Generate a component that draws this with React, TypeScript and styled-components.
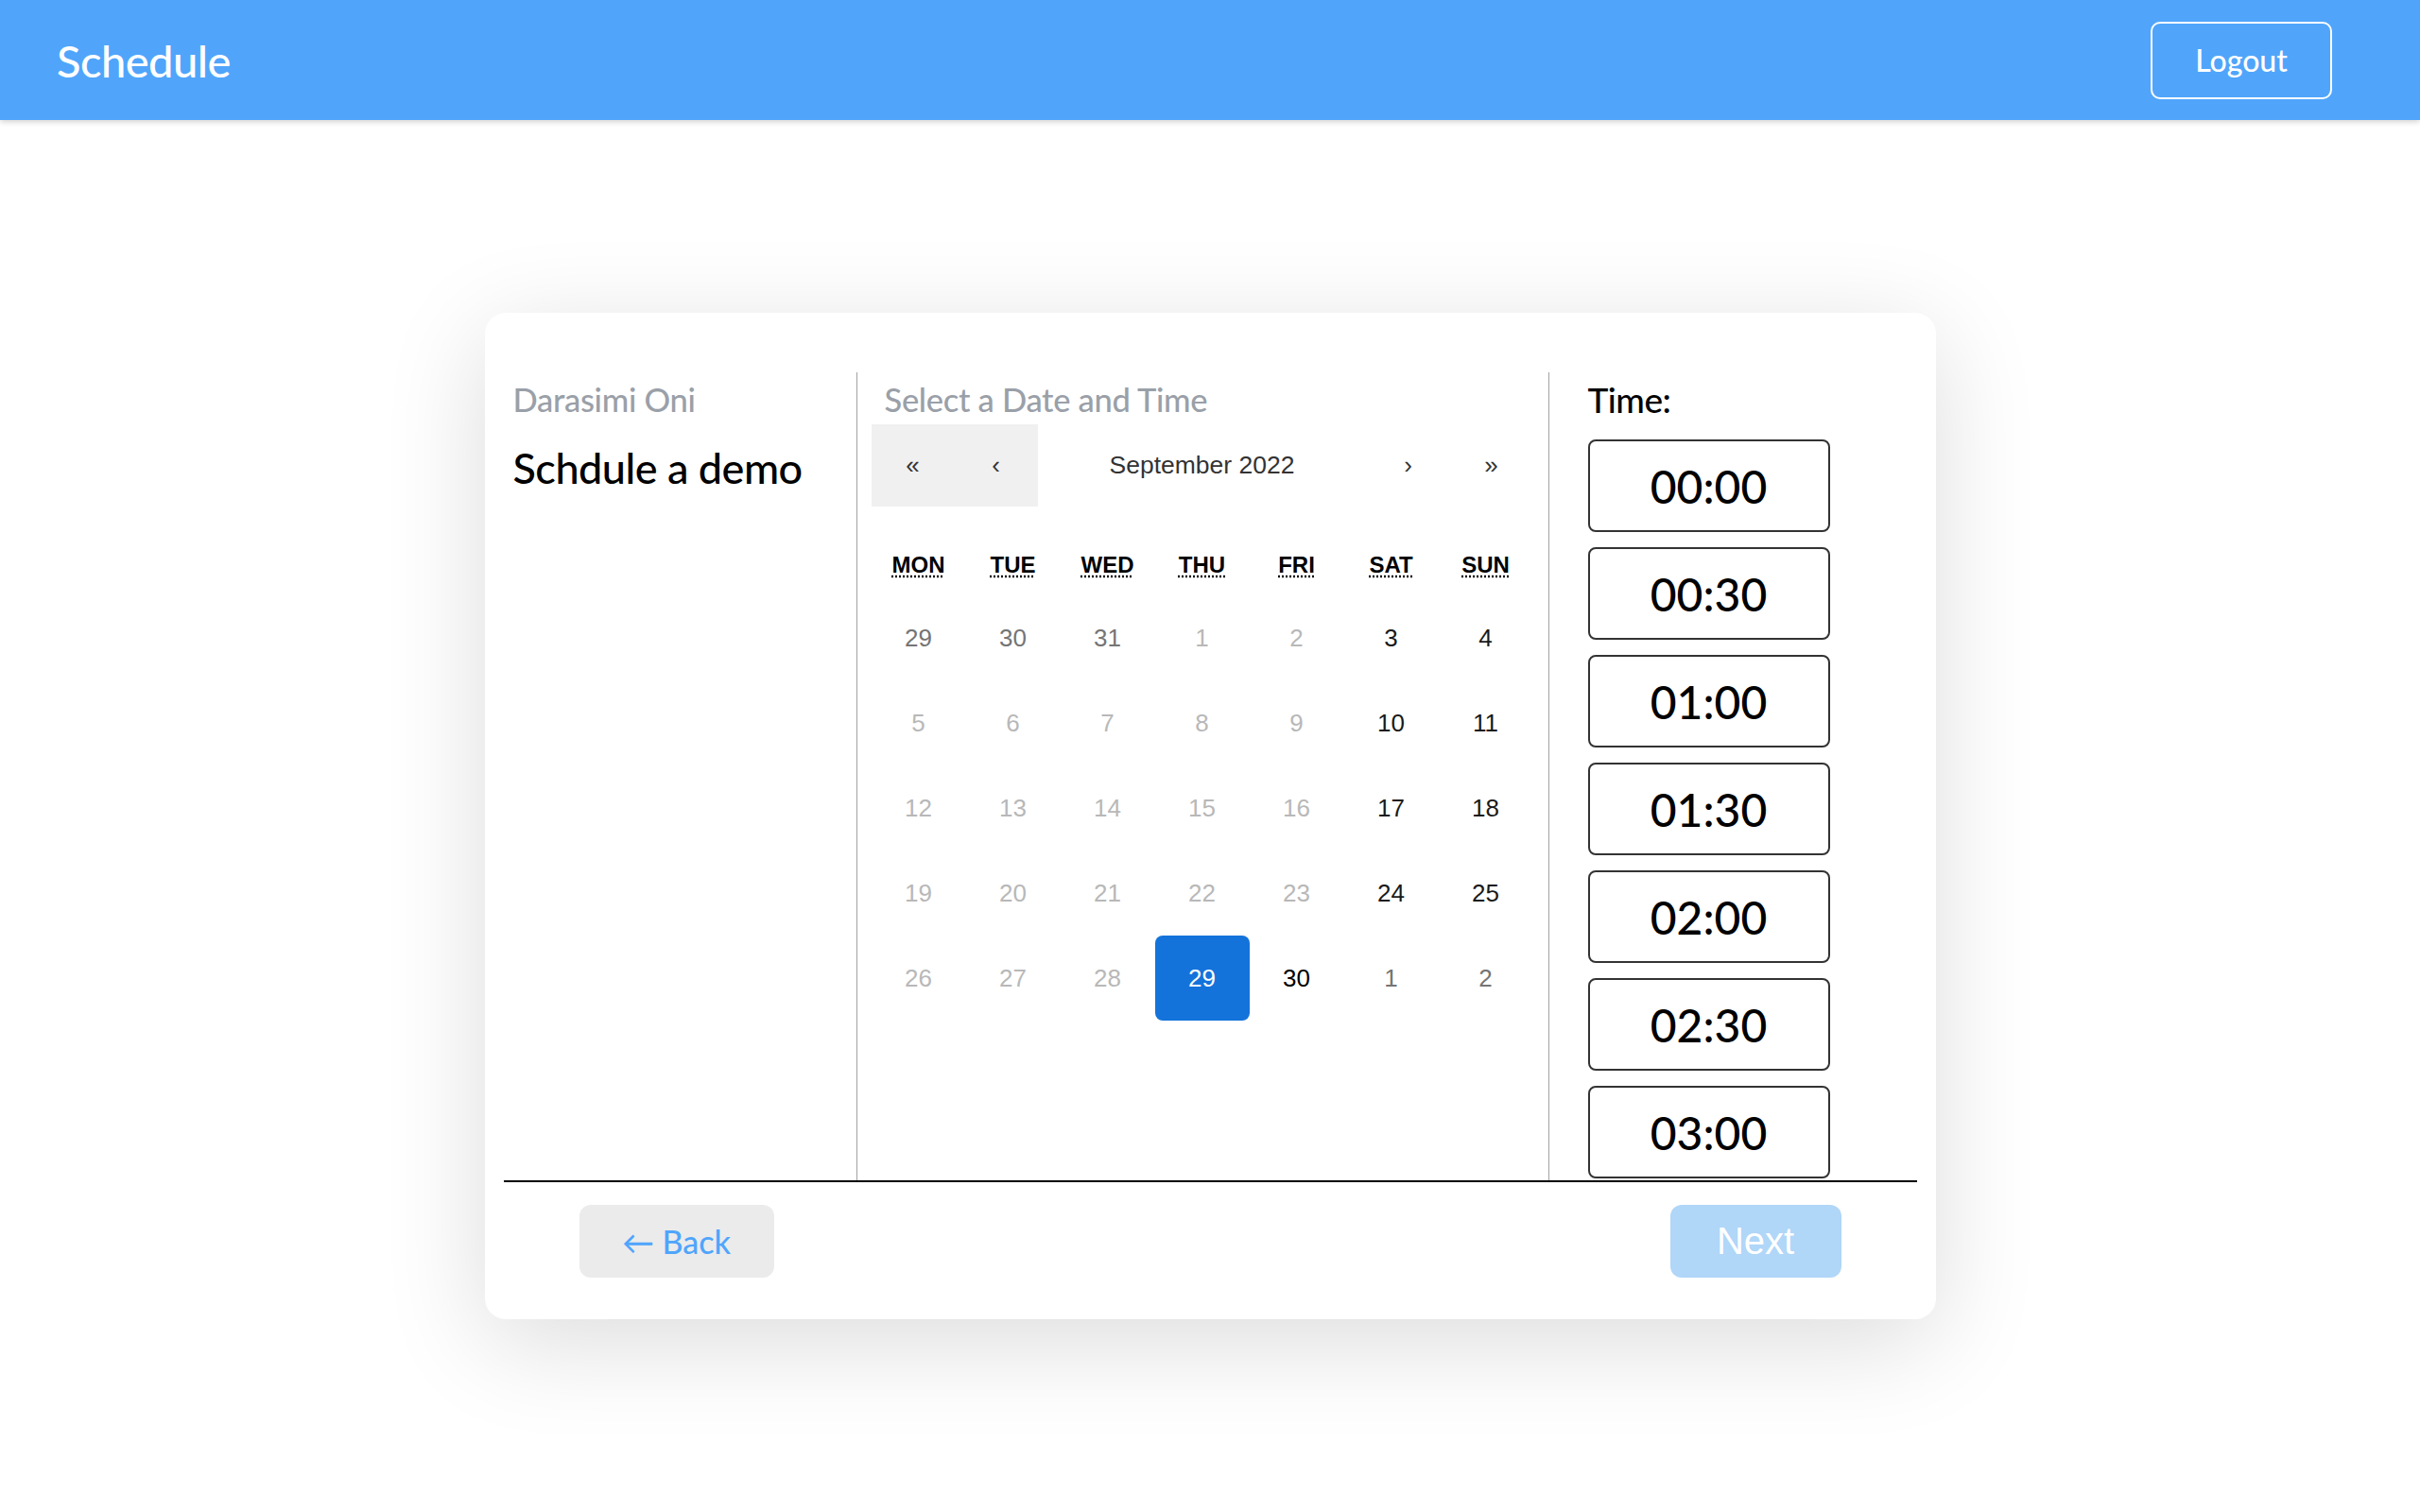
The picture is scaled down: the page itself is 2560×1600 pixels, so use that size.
import React from "react";
import styled, { createGlobalStyle } from "styled-components";

const GlobalStyle = createGlobalStyle`
  html, body { margin: 0; padding: 0; background: #ffffff; }
  body { font-family: Lato, "Noto Sans", sans-serif; }
  * { box-sizing: border-box; }
`;

const Header = styled.header`
  height: 127px;
  background: #50a5fb;
  display: flex;
  align-items: center;
  justify-content: space-between;
  padding: 0 93px 0 60px;
  box-shadow: 0 2px 6px rgba(0, 0, 0, 0.18);
  position: relative;
  z-index: 2;
`;

const Brand = styled.h1`
  margin: 0;
  font-family: Lato, sans-serif;
  font-weight: 500;
  font-size: 47px;
  color: #ffffff;
  letter-spacing: -0.5px;
`;

const LogoutButton = styled.button`
  width: 192px;
  height: 82px;
  border: 2px solid #ffffff;
  border-radius: 10px;
  background: transparent;
  color: #ffffff;
  font-family: Lato, sans-serif;
  font-weight: 500;
  font-size: 32px;
  cursor: pointer;
`;

const Main = styled.main`
  height: calc(100vh - 127px);
  display: flex;
  align-items: center;
  justify-content: center;
`;

const Card = styled.section`
  width: 1535px;
  height: 1065px;
  background: #ffffff;
  border-radius: 22px;
  box-shadow: 0 24px 110px rgba(0, 0, 0, 0.14);
  padding: 63px 20px 0 20px;
  display: flex;
  flex-direction: column;
`;

const Columns = styled.div`
  display: grid;
  grid-template-columns: 374px 732px 390px;
  height: 857px;
  border-bottom: 2px solid #000000;
`;

const Column = styled.div<{ $divider?: boolean; $pl: number }>`
  padding-left: ${(p) => p.$pl}px;
  border-right: ${(p) => (p.$divider ? "1px solid #a3a3a3" : "none")};
  display: flex;
  flex-direction: column;
  min-height: 0;
  overflow: hidden;
`;

const Subtitle = styled.div<{ $indent?: number }>`
  font-family: Lato, sans-serif;
  font-weight: 500;
  font-size: 34.5px;
  line-height: 42px;
  color: #9aa0a8;
  margin-top: 8px;
  margin-left: ${(p) => p.$indent ?? 0}px;
  letter-spacing: -0.3px;
`;

const Title = styled.h2`
  margin: 24px 0 0 0;
  font-family: Lato, sans-serif;
  font-weight: 500;
  font-size: 45px;
  line-height: 54px;
  color: #000000;
  letter-spacing: -0.5px;
`;

const Calendar = styled.div`
  width: 700px;
  margin-top: 5px;
  font-family: "Liberation Sans", Arial, sans-serif;
`;

const Nav = styled.div`
  display: flex;
  height: 87px;
  margin-bottom: 30px;
`;

const NavButton = styled.button<{ $disabled?: boolean }>`
  width: 88px;
  border: none;
  background: ${(p) => (p.$disabled ? "#f0f0f0" : "transparent")};
  font-family: "Liberation Sans", Arial, sans-serif;
  font-size: 26px;
  color: #333333;
  padding: 0;
`;

const NavLabel = styled.div`
  flex: 1;
  display: flex;
  align-items: center;
  justify-content: center;
  font-size: 26.5px;
  color: #333333;
`;

const Weekdays = styled.div`
  display: grid;
  grid-template-columns: repeat(7, 100px);
  height: 64px;
  align-items: center;
`;

const Weekday = styled.abbr`
  text-align: center;
  font-weight: 700;
  font-size: 24px;
  color: #000000;
  text-decoration: underline dotted;
  text-underline-offset: 3px;
  justify-self: center;
`;

const Days = styled.div`
  display: grid;
  grid-template-columns: repeat(7, 100px);
  grid-auto-rows: 90px;
`;

type Kind = "neighbor" | "disabled" | "weekend" | "current" | "active";

const dayColors: Record<Kind, string> = {
  neighbor: "#757575",
  disabled: "#b8b8b8",
  weekend: "#1a1a1a",
  current: "#000000",
  active: "#ffffff",
};

const Day = styled.button<{ $kind: Kind }>`
  border: none;
  border-radius: 8px;
  background: ${(p) => (p.$kind === "active" ? "#1473da" : "transparent")};
  color: ${(p) => dayColors[p.$kind]};
  font-family: "Liberation Sans", Arial, sans-serif;
  font-size: 26px;
  padding: 0;
`;

const TimeLabel = styled.div`
  font-family: Lato, sans-serif;
  font-weight: 500;
  font-size: 37px;
  line-height: 44px;
  color: #000000;
  margin-top: 7px;
  letter-spacing: -0.5px;
`;

const TimeList = styled.div`
  margin-top: 20px;
  display: flex;
  flex-direction: column;
  gap: 16px;
  overflow-y: auto;
  scrollbar-width: none;
  flex: 1;
  min-height: 0;
`;

const TimeButton = styled.button`
  flex: none;
  width: 256px;
  height: 98px;
  border: 2px solid #333333;
  border-radius: 8px;
  background: #ffffff;
  font-family: Lato, sans-serif;
  font-weight: 500;
  font-size: 48px;
  color: #000000;
  padding: 0;
`;

const Footer = styled.div`
  display: flex;
  justify-content: space-between;
  padding: 24px 80px 0 80px;
`;

const BackButton = styled.button`
  width: 206px;
  height: 77px;
  border: none;
  border-radius: 12px;
  background: #ebebeb;
  color: #50a5fb;
  font-family: Lato, sans-serif;
  font-weight: 500;
  font-size: 34px;
`;

const NextButton = styled.button`
  width: 181px;
  height: 77px;
  border: none;
  border-radius: 12px;
  background: #b0d6f8;
  color: #ffffff;
  font-family: "Liberation Sans", Arial, sans-serif;
  font-size: 40px;
`;

const weekdays = ["MON", "TUE", "WED", "THU", "FRI", "SAT", "SUN"];

const days: [string, Kind][] = [
  ["29", "neighbor"], ["30", "neighbor"], ["31", "neighbor"], ["1", "disabled"], ["2", "disabled"], ["3", "weekend"], ["4", "weekend"],
  ["5", "disabled"], ["6", "disabled"], ["7", "disabled"], ["8", "disabled"], ["9", "disabled"], ["10", "weekend"], ["11", "weekend"],
  ["12", "disabled"], ["13", "disabled"], ["14", "disabled"], ["15", "disabled"], ["16", "disabled"], ["17", "weekend"], ["18", "weekend"],
  ["19", "disabled"], ["20", "disabled"], ["21", "disabled"], ["22", "disabled"], ["23", "disabled"], ["24", "weekend"], ["25", "weekend"],
  ["26", "disabled"], ["27", "disabled"], ["28", "disabled"], ["29", "active"], ["30", "current"], ["1", "neighbor"], ["2", "neighbor"],
];

const times = ["00:00", "00:30", "01:00", "01:30", "02:00", "02:30", "03:00"];

export default function App() {
  return (
    <>
      <GlobalStyle />
      <Header>
        <Brand>Schedule</Brand>
        <LogoutButton>Logout</LogoutButton>
      </Header>
      <Main>
        <Card>
          <Columns>
            <Column $divider $pl={10}>
              <Subtitle>Darasimi Oni</Subtitle>
              <Title>Schdule a demo</Title>
            </Column>
            <Column $divider $pl={15}>
              <Subtitle $indent={14}>Select a Date and Time</Subtitle>
              <Calendar>
                <Nav>
                  <NavButton $disabled>«</NavButton>
                  <NavButton $disabled>‹</NavButton>
                  <NavLabel>September 2022</NavLabel>
                  <NavButton>›</NavButton>
                  <NavButton>»</NavButton>
                </Nav>
                <Weekdays>
                  {weekdays.map((w) => (
                    <Weekday key={w} title={w}>
                      {w}
                    </Weekday>
                  ))}
                </Weekdays>
                <Days>
                  {days.map(([d, k], i) => (
                    <Day key={i} $kind={k}>
                      {d}
                    </Day>
                  ))}
                </Days>
              </Calendar>
            </Column>
            <Column $pl={41}>
              <TimeLabel>Time:</TimeLabel>
              <TimeList>
                {times.map((t) => (
                  <TimeButton key={t}>{t}</TimeButton>
                ))}
              </TimeList>
            </Column>
          </Columns>
          <Footer>
            <BackButton>← Back</BackButton>
            <NextButton>Next</NextButton>
          </Footer>
        </Card>
      </Main>
    </>
  );
}
